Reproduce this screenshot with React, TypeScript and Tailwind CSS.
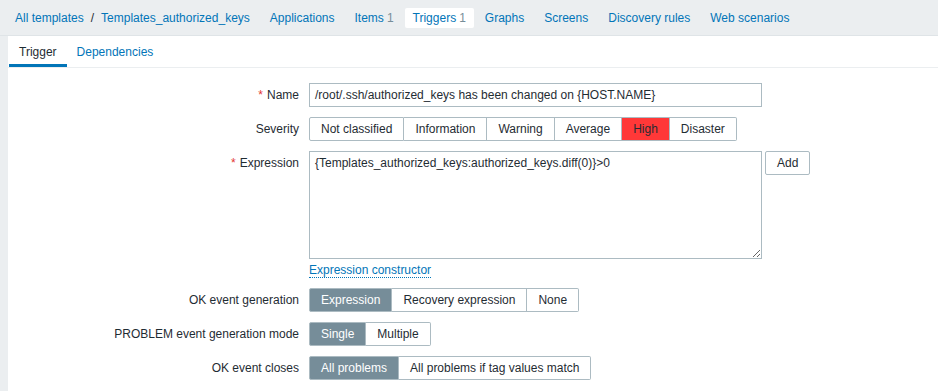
import React from "react";

const font = { fontFamily: '"Liberation Sans", Arial, sans-serif' };

function NavItem({ children, active }: { children: React.ReactNode; active?: boolean }) {
  return (
    <div
      className={
        active
          ? "px-[8px] h-[20px] flex items-center bg-white rounded-[2px] text-[#0275b8] mx-[1px]"
          : "px-[10px] h-[20px] flex items-center text-[#0275b8]"
      }
    >
      {children}
    </div>
  );
}

function Seg({
  items,
  selected,
  red,
}: {
  items: string[];
  selected?: number;
  red?: number;
}) {
  return (
    <div className="flex h-[24px]">
      {items.map((t, i) => {
        const first = i === 0;
        const last = i === items.length - 1;
        let cls =
          "h-[24px] flex items-center px-[11px] border-y border-r border-[#acbbc2] ";
        if (first) cls += "border-l rounded-l-[2px] ";
        if (last) cls += "rounded-r-[2px] ";
        if (selected === i) cls += "bg-[#768d99] border-[#768d99] text-white ";
        else if (red === i) cls += "bg-[#ff3838] border-[#768d99] text-[#1f2c33] ";
        else cls += "bg-white text-[#1f2c33] ";
        return (
          <div key={t} className={cls}>
            {t}
          </div>
        );
      })}
    </div>
  );
}

function Row({
  label,
  req,
  children,
  className,
}: {
  label: string;
  req?: boolean;
  children: React.ReactNode;
  className?: string;
}) {
  return (
    <div className={"flex items-start " + (className ?? "")}>
      <div className="w-[291px] h-[24px] flex items-center justify-end text-[#1f2c33]">
        {req && <span className="text-[#e33734] mr-[4px]">*</span>}
        {label}
      </div>
      <div className="ml-[10px]">{children}</div>
    </div>
  );
}

export default function App() {
  return (
    <div
      className="w-[938px] h-[391px] bg-[#ebeef0] text-[12px] leading-[14px] overflow-hidden flex flex-col"
      style={font}
    >
      <div className="h-[36px] flex items-center pl-[5px] border-b border-[#dfe4e7]">
        <div className="px-[10px] flex items-center text-[#0275b8]">
          <span>All templates</span>
          <span className="mx-[7px] text-[#1f2c33]">/</span>
          <span>Templates_authorized_keys</span>
        </div>
        <NavItem>Applications</NavItem>
        <NavItem>
          Items<span className="text-[#768d99] ml-[3px]">1</span>
        </NavItem>
        <NavItem active>
          Triggers<span className="text-[#768d99] ml-[3px]">1</span>
        </NavItem>
        <NavItem>Graphs</NavItem>
        <NavItem>Screens</NavItem>
        <NavItem>Discovery rules</NavItem>
        <NavItem>Web scenarios</NavItem>
      </div>
      <div className="ml-[8px] flex-1 bg-white flex flex-col">
        <div className="flex h-[32px] border-b border-[#ebeef0] pl-[1px]">
          <div className="px-[10px] flex items-center border-b-[3px] border-[#0275b8] text-[#1f2c33] pt-[3px]">
            Trigger
          </div>
          <div className="px-[10px] flex items-center text-[#0275b8] pt-[3px] pb-[3px]">
            Dependencies
          </div>
        </div>
        <div className="pt-[15px] flex flex-col gap-[10px]">
          <Row label="Name" req>
            <div className="w-[453px] h-[24px] border border-[#acbbc2] flex items-center px-[5px] text-[#1f2c33]">
              /root/.ssh/authorized_keys has been changed on {"{HOST.NAME}"}
            </div>
          </Row>
          <Row label="Severity">
            <Seg
              items={["Not classified", "Information", "Warning", "Average", "High", "Disaster"]}
              red={4}
            />
          </Row>
          <Row label="Expression" req>
            <div className="flex items-start gap-[3px]">
              <div className="flex flex-col">
                <textarea
                  readOnly
                  className="w-[453px] h-[108px] border border-[#acbbc2] px-[5px] py-[4px] text-[#1f2c33] outline-none resize-y"
                  style={{ ...font, fontSize: 12, lineHeight: "14px" }}
                  value="{Templates_authorized_keys:authorized_keys.diff(0)}>0"
                />
                <div className="mt-[4px] h-[15px] flex items-center">
                  <span className="text-[#0275b8] border-b border-dotted border-[#0275b8] leading-[14px]">
                    Expression constructor
                  </span>
                </div>
              </div>
              <div className="h-[24px] px-[11px] border border-[#acbbc2] rounded-[2px] flex items-center text-[#1f2c33]">
                Add
              </div>
            </div>
          </Row>
          <Row label="OK event generation">
            <Seg items={["Expression", "Recovery expression", "None"]} selected={0} />
          </Row>
          <Row label="PROBLEM event generation mode">
            <Seg items={["Single", "Multiple"]} selected={0} />
          </Row>
          <Row label="OK event closes">
            <Seg items={["All problems", "All problems if tag values match"]} selected={0} />
          </Row>
        </div>
      </div>
    </div>
  );
}
